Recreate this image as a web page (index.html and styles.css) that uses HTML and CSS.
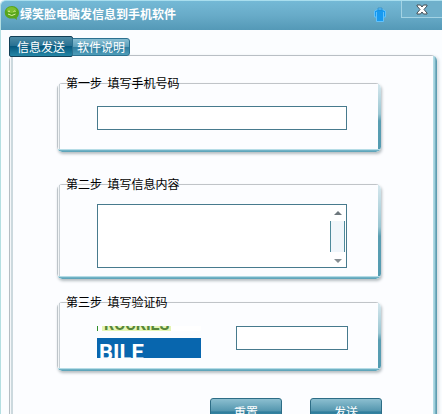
FILE: index.html
```html
<!DOCTYPE html>
<html lang="zh-CN">
<head>
  <meta charset="UTF-8" />
  <title>绿笑脸电脑发信息到手机软件</title>
  <link rel="stylesheet" href="styles.css">
</head>
<body>

  <div class="window">
    <!-- Title Bar -->
    <header class="titlebar">
      <svg class="logo" width="16" height="16" viewBox="0 0 16 16" aria-hidden="true">
        <path d="M8 1C3.500 1 .8 4 .8 7.500S3.500 13.500 7 13.500h4l2 1.500-.3-2.300C14.300 11.500 15 9.500 15 7.500 15 4 12 1 8 1z" fill="#58a51c"/>
        <ellipse cx="7.500" cy="5" rx="5" ry="3" fill="#7cbf30"/>
        <path d="M4 6.500q1-1 2 0M9.500 6.500q1-1 2 0M4 9q3.800 3 7.500 0" fill="none" stroke="#dff2a4"/>
      </svg>
      <h1>绿笑脸电脑发信息到手机软件</h1>
      <button type="button" class="skin-btn" aria-label="换肤">
        <svg width="14" height="16" viewBox="0 0 14 16">
          <path d="M4.500 2.500h5l3 1.500v6h-2v4.500h-7V10h-2V4z" fill="#189af0" stroke="#62c1fa"/>
          <path d="M3.500 5v5M10.500 5v5" stroke="#62c1fa"/>
          <path d="M5 1h4v2H5z" fill="#62c1fa" stroke="#1c83c8" stroke-width=".6"/>
        </svg>
      </button>
      <button type="button" class="close-btn" aria-label="关闭">
        <svg width="12" height="11" viewBox="0 0 12 11">
          <path d="M1 1h3.500L6 3l1.500-2H11v1L8 5.500 11 9v1H7.500L6 8l-1.500 2H1V9l3-3.500L1 2z" fill="#fff" stroke="#454e55"/>
        </svg>
      </button>
    </header>

    <!-- Tabs -->
    <nav class="tabs">
      <button type="button" class="tab active">信息发送</button>
      <button type="button" class="tab">软件说明</button>
    </nav>

    <!-- Send Form -->
    <main class="panel">
      <form id="sendForm">
        <fieldset class="step">
          <legend>第一步&nbsp; 填写手机号码</legend>
          <div class="step-body phone-body">
            <input type="text" class="field" name="phone" aria-label="手机号码" />
          </div>
        </fieldset>

        <fieldset class="step">
          <legend>第二步&nbsp; 填写信息内容</legend>
          <div class="step-body message-body">
            <div class="message-box">
              <textarea name="message" aria-label="信息内容"></textarea>
              <div class="scrollbar">
                <span class="arrow up"></span>
                <span class="thumb"></span>
                <span class="arrow down"></span>
              </div>
            </div>
          </div>
        </fieldset>

        <fieldset class="step">
          <legend>第三步&nbsp; 填写验证码</legend>
          <div class="step-body code-body">
            <svg class="captcha" width="104" height="32" viewBox="0 0 104 32" role="img" aria-label="验证码">
              <defs>
                <clipPath id="strip"><rect width="104" height="5"/></clipPath>
                <clipPath id="block"><rect y="12" width="104" height="20"/></clipPath>
              </defs>
              <g clip-path="url(#strip)">
                <rect width="104" height="5" fill="#fff"/>
                <rect x="5" width="69" height="5" fill="#e5f5b4"/>
                <rect width="1" height="5" fill="#2f8f2b"/>
                <text x="7" y="4" class="captcha-top">ROCKIES</text>
              </g>
              <g clip-path="url(#block)">
                <rect y="12" width="104" height="20" fill="#0866ae"/>
                <text x="2" y="34" class="captcha-main">BILE</text>
              </g>
            </svg>
            <input type="text" class="field" name="code" aria-label="验证码" />
          </div>
        </fieldset>

        <div class="actions">
          <button type="reset" class="btn">重置</button>
          <button type="submit" class="btn">发送</button>
        </div>
      </form>
    </main>
  </div>

</body>
</html>
```
FILE: styles.css
```css
/* === Base === */
* {
  box-sizing: border-box;
}

body {
  margin: 0;
  height: 100vh;
  overflow: hidden;
  background: #fbfdff;
  color: #000;
  font-family: "Noto Sans CJK SC", sans-serif;
  font-size: 12px;
  line-height: 16px;
}

button,
input,
textarea {
  font: inherit;
}

.window {
  display: flex;
  flex-direction: column;
  min-height: 100vh;
  border-left: 1px solid #b4dfe2;
  border-radius: 5px 0 0 0;
}

/* === Title Bar === */
.titlebar {
  display: flex;
  align-items: flex-start;
  height: 30px;
  padding: 0 0 0 3px;
  border-top: 1px solid #a9deee;
  border-radius: 5px 0 0 0;
  background: linear-gradient(#74b9d6, #68abc8 50%, #5499b7);
}

.logo {
  margin-top: 4px;
}

.titlebar h1 {
  flex: 1;
  margin: 5px 0 0;
  color: #fff;
  font-size: 12px;
  font-weight: 700;
  white-space: nowrap;
}

.skin-btn,
.close-btn {
  display: flex;
  align-items: center;
  justify-content: center;
  padding: 0;
  border: 0;
  background: none;
}

.skin-btn {
  margin: 6px 14px 0 0;
}

.close-btn {
  width: 41px;
  height: 17px;
  border: 1px solid #a3d3e4;
  border-width: 0 0 1px 1px;
  background: #6fb0cb;
}

/* === Tabs === */
.tabs {
  position: relative;
  display: flex;
  align-items: center;
  margin: 6px 8px 0;
}

.tab {
  height: 18px;
  margin-left: -1px;
  padding: 0 4px;
  border: 1px solid #2c7190;
  border-radius: 0 3px 3px 0;
  background: linear-gradient(#86bdd2, #5b9fba 50%, #2d7c9e 50%, #4f9db9);
  color: #fff;
  line-height: 16px;
}

.tab.active {
  height: 21px;
  margin-left: 0;
  padding: 0 7px;
  border-color: #123f56;
  border-radius: 2px;
  background: linear-gradient(#4d8ba5, #256f91 50%, #06597f 50%, #2687a6);
}

/* === Panel === */
.panel {
  flex: 1;
  margin: -2px 5px 0 8px;
  padding: 19px 52px 0 44px;
  border: 4px solid transparent;
  border-top-width: 1px;
  border-bottom: 0;
  border-radius: 6px 6px 0 0;
  background:
    linear-gradient(#fcfdff, #fcfdff) padding-box,
    linear-gradient(#b9bfc5, #b9bfc5) top / 100% 1px no-repeat border-box,
    linear-gradient(90deg, #b5bdc3 1px, #f4f7f9 1px, #f4f7f9 2px, #ccd9de 2px) left / 4px 100% no-repeat border-box,
    linear-gradient(90deg, #b1dbe5 1px, #8fc3d1 2px, #5e9db1 3px) right / 4px 100% no-repeat border-box;
  box-shadow: 2px 1px 3px #d8dfe3;
}

/* === Steps === */
.step {
  min-width: 0;
  margin: 0 0 24px;
  padding: 0;
  border: 3px solid transparent;
  border-top-width: 1px;
  border-radius: 5px;
  background:
    linear-gradient(#fcfdff, #fcfdff) padding-box,
    linear-gradient(#c0c4c8, #c0c4c8) top / 100% 1px no-repeat border-box,
    linear-gradient(#b5dce6 1px, #79b8ca 1px, #579fb5) bottom / 100% 3px no-repeat border-box,
    linear-gradient(90deg, #bdc4c9 1px, #f1f4f6 1px, #f1f4f6 2px, #c9d0d5 2px) left / 3px 100% no-repeat border-box,
    linear-gradient(#d7e8ee, #9ac6d2 45%, #5a9eb2 55%, #529bb1) right / 3px 100% no-repeat border-box;
  box-shadow: 1px 2px 3px #b5bdc1;
}

.step + .step {
  margin-bottom: 15px;
}

.step legend {
  margin-left: 4px;
  padding: 0 2px;
}

.phone-body {
  padding: 15px 31px 19px 37px;
}

.message-body {
  padding: 12px 31px 8px 37px;
}

.code-body {
  display: flex;
  align-items: flex-start;
  gap: 35px;
  padding: 16px 30px 10px 37px;
}

/* === Fields === */
.field {
  display: block;
  width: 100%;
  height: 24px;
  padding: 0 4px;
  border: 1px solid #477a8d;
  background: #fff;
}

.field:focus,
.message-box textarea:focus {
  outline: none;
}

.message-box {
  display: flex;
  height: 64px;
  border: 1px solid #477a8d;
  background: #fff;
}

.message-box textarea {
  flex: 1;
  min-width: 0;
  padding: 2px 4px;
  border: 0;
  background: none;
  resize: none;
  overflow: hidden;
}

.scrollbar {
  display: flex;
  flex-direction: column;
  align-items: center;
  width: 15px;
  margin-right: 1px;
}

.thumb {
  flex: 1;
  width: 100%;
  border: 1px solid #4d8a9b;
  border-width: 0 1px;
  background: #f0f6fb;
}

.arrow {
  width: 0;
  border: 4px solid transparent;
}

.arrow.up {
  margin: 2px 0 6px;
  border-bottom-color: #6d777c;
}

.arrow.down {
  margin: 7px 0 0;
  border-top-color: #858d91;
}

/* === Captcha === */
.captcha {
  flex: none;
}

.captcha-top {
  fill: #56873a;
  font: bold 16px Roboto, sans-serif;
}

.captcha-main {
  fill: #fff;
  font: bold 22px Roboto, sans-serif;
}

/* === Buttons === */
.actions {
  display: flex;
  justify-content: flex-end;
  gap: 28px;
  margin: 27px -1px 0 0;
}

.btn {
  width: 72px;
  height: 28px;
  padding: 0;
  border: 1px solid #2d6d86;
  border-radius: 3px;
  background: linear-gradient(#8cbfd0, #5597af 45%, #2f7d9b 50%, #56a5bf);
  color: #fff;
}
```
